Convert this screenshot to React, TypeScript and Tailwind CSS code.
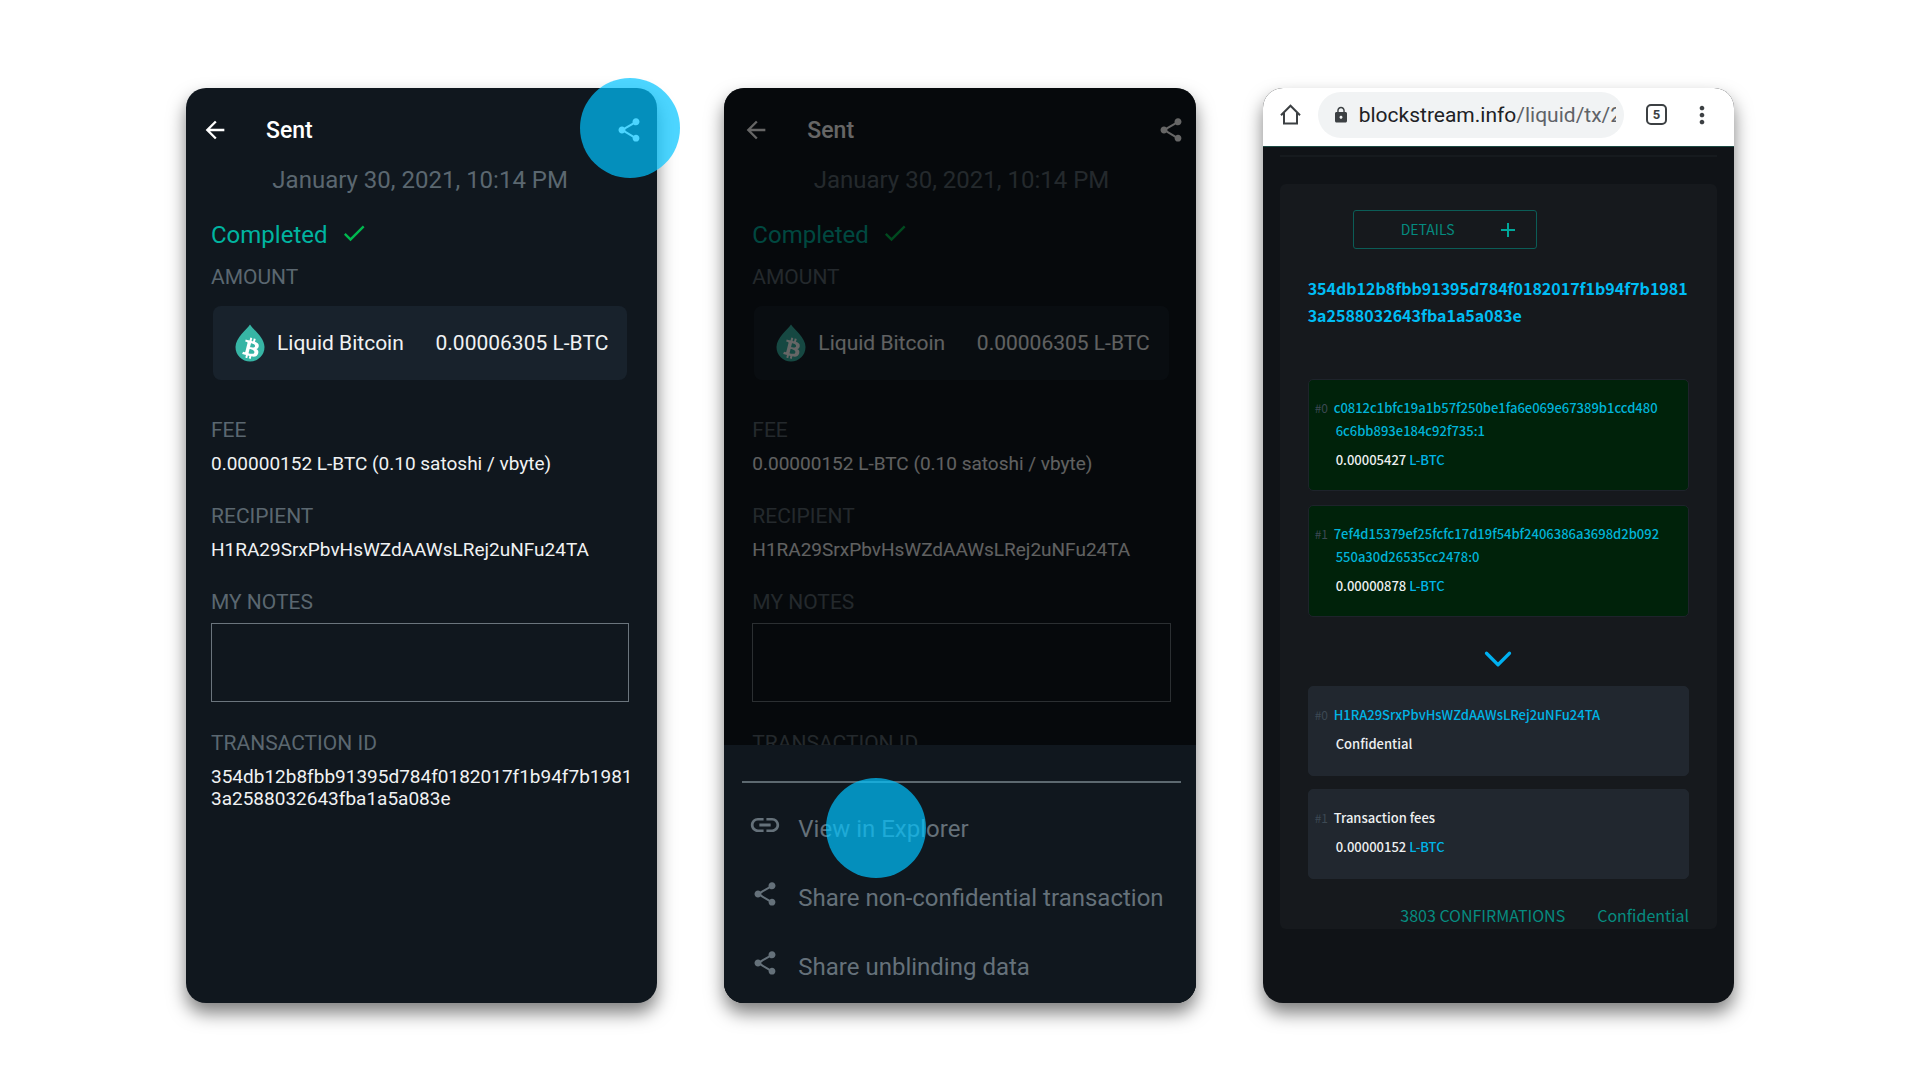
import clsx from 'clsx'
import { MdArrowBack, MdCheck, MdLink, MdLock, MdMoreVert, MdShare } from 'react-icons/md'
import { FaBtc } from 'react-icons/fa'
import { FiChevronDown } from 'react-icons/fi'

const TXID = '354db12b8fbb91395d784f0182017f1b94f7b19813a2588032643fba1a5a083e'
const ADDRESS = 'H1RA29SrxPbvHsWZdAAWsLRej2uNFu24TA'

interface PhoneProps {
  label: string
  className?: string
  children: React.ReactNode
}

function Phone({ label, className, children }: PhoneProps) {
  return (
    <section
      aria-label={label}
      className={clsx(
        'relative flex min-h-[915px] min-w-0 flex-col rounded-[20px] shadow-[0_10px_18px_rgba(0,0,0,0.5)]',
        className
      )}
    >
      {children}
    </section>
  )
}

function TouchDot({ className }: { className: string }) {
  return (
    <span
      aria-hidden="true"
      className={clsx('pointer-events-none absolute size-[100px] rounded-full bg-[#00c3ff]/70', className)}
    />
  )
}

function LiquidLogo() {
  return (
    <svg viewBox="0 0 30 38" className="h-[38px] w-[30px] shrink-0" aria-hidden="true">
      <path
        d="M15 .5C12 5.500 .5 13.500 .5 23a14.500 14.500 0 0 0 29 0C29.500 13.500 18 5.500 15 .5Z"
        fill="#37b5a5"
      />
      <g transform="rotate(14 15 22)">
        <FaBtc x="6.500" y="13.500" width="17" height="17" color="#fff" />
      </g>
    </svg>
  )
}

function Label({ children, className }: { children: React.ReactNode; className?: string }) {
  return <h3 className={clsx('text-[21px] leading-6 text-[#5b6770]', className)}>{children}</h3>
}

function SentScreen({ id }: { id: string }) {
  return (
    <div className="flex flex-col">
      <header className="flex items-center pt-[27px] pr-[14px] pl-[15px]">
        <button type="button" aria-label="Back">
          <MdArrowBack className="size-7 text-white" />
        </button>
        <h2 className="ml-[37px] flex-1 pt-[2px] text-[23px] leading-7 font-medium text-white">Sent</h2>
        <button type="button" aria-label="Share">
          <MdShare className="size-7 text-white" />
        </button>
      </header>
      <div className="pr-7 pl-[25px]">
        <p className="mt-[19px] text-center text-2xl leading-8 text-[#5b6770]">January 30, 2021, 10:14 PM</p>
        <p className="mt-[23px] flex items-start gap-3 text-2xl leading-8 text-[#00b4a0]">
          Completed
          <MdCheck className="size-7 text-[#00b84f]" />
        </p>
        <Label className="mt-[14px]">AMOUNT</Label>
        <div className="mx-[2px] mt-[17px] flex h-[74px] items-center rounded-lg bg-[#18222c] pr-[19px] pl-[22px] text-[21px] leading-6 text-[#f0f2f3]">
          <LiquidLogo />
          <span className="ml-3 flex-1">Liquid Bitcoin</span>
          <span>0.00006305 L-BTC</span>
        </div>
        <Label className="mt-[38px]">FEE</Label>
        <p className="mt-[11px] text-[19px] leading-[22px] text-[#f0f2f3]">0.00000152 L-BTC (0.10 satoshi / vbyte)</p>
        <Label className="mt-[29px]">RECIPIENT</Label>
        <p className="mt-[11px] text-[19px] leading-[22px] text-[#f0f2f3]">{ADDRESS}</p>
        <Label className="mt-[29px]">
          <label htmlFor={id}>MY NOTES</label>
        </Label>
        <textarea
          id={id}
          className="mt-[9px] block h-[79px] w-full resize-none border border-[#6b757d] bg-transparent text-[19px] text-white outline-none"
        />
        <Label className="mt-[29px]">TRANSACTION ID</Label>
        <p className="-mr-2 mt-[11px] text-[19px] leading-[22px] break-all text-[#f0f2f3]">{TXID}</p>
      </div>
    </div>
  )
}

const actions = [
  { icon: MdLink, text: 'View in Explorer', size: 'size-[34px]' },
  { icon: MdShare, text: 'Share non-confidential transaction', size: 'size-7' },
  { icon: MdShare, text: 'Share unblinding data', size: 'size-7' },
]

function ActionSheet() {
  return (
    <div className="absolute inset-x-0 bottom-0 h-[258px] rounded-b-[20px] bg-[#10171e] pt-9 pr-[15px] pl-[18px]">
      <hr className="border-t-2 border-[#5d6970]" />
      <ul className="mt-[11px]">
        {actions.map(({ icon: Icon, text, size }) => (
          <li key={text}>
            <button type="button" className="flex h-[69px] w-full items-center text-left text-2xl leading-8 text-[#65717a]">
              <span className="flex w-[46px] shrink-0 justify-center pb-2">
                <Icon className={size} />
              </span>
              <span className="ml-[10px] whitespace-nowrap">{text}</span>
            </button>
          </li>
        ))}
      </ul>
    </div>
  )
}

function BrowserBar() {
  return (
    <header className="flex h-[59px] items-center rounded-t-[20px] border-b border-[#1d4a44] bg-white pb-[5px]">
      <button type="button" aria-label="Home" className="ml-[17px]">
        <svg viewBox="0 0 21 21" className="size-[21px]" fill="none" stroke="#3c4043" strokeWidth="2">
          <path d="M1 11.200 10.500 1.700 20 11.200M4 9V19.500H17V9" />
        </svg>
      </button>
      <div className="ml-[17px] flex h-[46px] min-w-0 flex-1 items-center rounded-full bg-[#f1f3f4] pr-2 pl-[14px]">
        <MdLock className="size-[18px] shrink-0 text-[#3c4043]" />
        <p className="ml-[9px] overflow-hidden text-[21px] leading-7 whitespace-nowrap text-[#202124]">
          blockstream.info<span className="text-[#5f6368]">/liquid/tx/2</span>
        </p>
      </div>
      <button
        type="button"
        aria-label="Tabs"
        className="ml-[22px] size-[21px] rounded-[5px] border-2 border-[#3c4043] text-center text-[13px] leading-[17px] font-bold text-[#3c4043]"
      >
        5
      </button>
      <button type="button" aria-label="Menu" className="mr-[18px] ml-[21px]">
        <MdMoreVert className="size-7 text-[#3c4043]" />
      </button>
    </header>
  )
}

interface EntryProps {
  index: number
  input?: boolean
  title: React.ReactNode
  amount: React.ReactNode
}

function Entry({ index, input, title, amount }: EntryProps) {
  return (
    <li
      className={clsx(
        'rounded-[5px] border pt-4 pr-6 pl-[6px] text-[13px] leading-[23px] font-medium text-[#eef0f1]',
        input ? 'h-[112px] border-[#1e232b] bg-[#00220a]' : 'h-[90px] border-[#21272f] bg-[#21272f]'
      )}
    >
      <div className="flex">
        <span className="w-[19px] shrink-0 text-[12px] font-normal text-[#3d4954]">#{index}</span>
        <div className="min-w-0 break-all">{title}</div>
      </div>
      <p className="mt-[6px] ml-[21px]">{amount}</p>
    </li>
  )
}

function Lbtc() {
  return (
    <a href="#lbtc" className="text-[#00b4e6]">
      L-BTC
    </a>
  )
}

const inputs = [
  { tx: 'c0812c1bfc19a1b57f250be1fa6e069e67389b1ccd480', rest: '6c6bb893e184c92f735:1', value: '0.00005427' },
  { tx: '7ef4d15379ef25fcfc17d19f54bf2406386a3698d2b092', rest: '550a30d26535cc2478:0', value: '0.00000878' },
]

function ExplorerScreen() {
  return (
    <>
      <BrowserBar />
      <main className="px-[17px] pt-2 font-['Noto_Sans_CJK_JP','Noto_Sans_CJK_SC',sans-serif]">
        <hr className="border-t-2 border-[#161a1e]" />
        <div className="mt-[27px] rounded-md bg-[#16191d] px-7 pt-[26px] pb-[2px]">
          <button
            type="button"
            className="ml-[45px] flex h-[39px] w-[184px] items-center rounded-[3px] border border-[#0b5d57] pr-[21px] pl-[47px] text-[14px] text-[#058a7f]"
          >
            <span className="flex-1 text-left">DETAILS</span>
            <svg viewBox="0 0 14 14" className="size-[14px]" stroke="#00a79a" strokeWidth="2">
              <path d="M7 0v14M0 7h14" />
            </svg>
          </button>
          <h2 className="mt-[26px] text-[16px] leading-[27px] font-bold break-all text-[#00bdf4]">{TXID}</h2>
          <ul className="mt-[50px] flex flex-col gap-[14px]">
            {inputs.map(({ tx, rest, value }, i) => (
              <Entry
                key={tx}
                index={i}
                input
                title={
                  <a href={`#input-${i}`} className="text-[#00b4d8]">
                    {tx}
                    <span className="ml-[2px] block">{rest}</span>
                  </a>
                }
                amount={
                  <>
                    {value} <Lbtc />
                  </>
                }
              />
            ))}
          </ul>
          <FiChevronDown className="mx-auto mt-[19px] mb-1 size-[46px] text-[#00b0f0]" strokeWidth={1.7} />
          <ul className="flex flex-col gap-[13px]">
            <Entry
              index={0}
              title={
                <a href="#output-0" className="text-[#00b4e6]">
                  {ADDRESS}
                </a>
              }
              amount="Confidential"
            />
            <Entry
              index={1}
              title="Transaction fees"
              amount={
                <>
                  0.00000152 <Lbtc />
                </>
              }
            />
          </ul>
          <p className="mt-6 flex justify-end gap-8 text-[16px] leading-6 text-[#068c80]">
            <span>3803 CONFIRMATIONS</span>
            <span>Confidential</span>
          </p>
        </div>
      </main>
    </>
  )
}

export default function App() {
  return (
    <div className="min-h-screen bg-white pt-[88px] pb-[77px] font-[Roboto,sans-serif]">
      <div className="mx-auto grid w-full max-w-[1548px] grid-cols-3 gap-[67px]">
        <Phone label="Sent transaction" className="bg-[#10171e]">
          <SentScreen id="notes" />
          <TouchDot className="-top-[10px] -right-[23px]" />
        </Phone>
        <Phone label="Share menu" className="bg-[#10171e]">
          <div className="-mr-[3px] ml-[3px]">
            <SentScreen id="notes-dimmed" />
          </div>
          <div className="absolute inset-0 rounded-[20px] bg-black/60" />
          <ActionSheet />
          <TouchDot className="top-[690px] left-[102px]" />
        </Phone>
        <Phone label="Block explorer" className="bg-[#101317]">
          <ExplorerScreen />
        </Phone>
      </div>
    </div>
  )
}
